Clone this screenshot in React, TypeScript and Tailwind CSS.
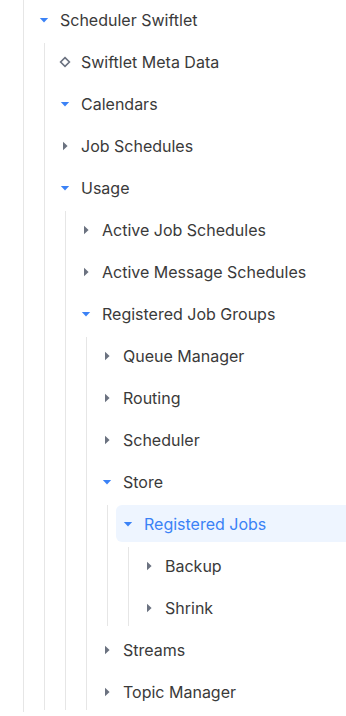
import React from "react";

type Node = {
  label: string;
  kind: "open" | "closed" | "leaf";
  active?: boolean;
  children?: Node[];
};

const tree: Node = {
  label: "Scheduler Swiftlet",
  kind: "open",
  children: [
    { label: "Swiftlet Meta Data", kind: "leaf" },
    { label: "Calendars", kind: "open", children: [] },
    { label: "Job Schedules", kind: "closed" },
    {
      label: "Usage",
      kind: "open",
      children: [
        { label: "Active Job Schedules", kind: "closed" },
        { label: "Active Message Schedules", kind: "closed" },
        {
          label: "Registered Job Groups",
          kind: "open",
          children: [
            { label: "Queue Manager", kind: "closed" },
            { label: "Routing", kind: "closed" },
            { label: "Scheduler", kind: "closed" },
            {
              label: "Store",
              kind: "open",
              children: [
                {
                  label: "Registered Jobs",
                  kind: "open",
                  active: true,
                  children: [
                    { label: "Backup", kind: "closed" },
                    { label: "Shrink", kind: "closed" },
                  ],
                },
              ],
            },
            { label: "Streams", kind: "closed" },
            { label: "Topic Manager", kind: "closed" },
          ],
        },
      ],
    },
  ],
};

function Icon({ kind }: { kind: Node["kind"] }) {
  if (kind === "open")
    return (
      <svg width="16" height="16" viewBox="0 0 16 16">
        <path d="M3.8 6 L12.2 6 L8 10.6 Z" fill="#3b82f6" />
      </svg>
    );
  if (kind === "closed")
    return (
      <svg width="16" height="16" viewBox="0 0 16 16">
        <path d="M6 3.8 L10.6 8 L6 12.2 Z" fill="#6b7280" />
      </svg>
    );
  return (
    <svg width="16" height="16" viewBox="0 0 16 16">
      <path d="M8 3.6 L12.4 8 L8 12.4 L3.6 8 Z" fill="none" stroke="#6b7280" strokeWidth="1.6" />
    </svg>
  );
}

function TreeNode({ node }: { node: Node }) {
  const hasKids = node.kind === "open" && node.children && node.children.length > 0;
  return (
    <div className="flex flex-col">
      <div
        className={
          "flex h-[37px] items-center gap-2 pl-1 rounded-l-md " +
          (node.active ? "bg-[#eef5ff] text-[#3b82f6]" : "text-[#3a3a3a]")
        }
      >
        <span className="flex w-4 h-4 items-center justify-center shrink-0">
          <Icon kind={node.kind} />
        </span>
        <span className="text-base leading-none whitespace-nowrap">{node.label}</span>
      </div>
      {hasKids && (
        <div className="ml-3 mt-[5px] flex flex-col gap-[5px] border-l border-[#e6e6e6] pl-2">
          {node.children!.map((c) => (
            <TreeNode key={c.label} node={c} />
          ))}
        </div>
      )}
    </div>
  );
}

export default function App() {
  return (
    <div
      className="w-[346px] h-[716px] bg-white overflow-hidden"
      style={{ fontFamily: "Inter, 'Noto Sans', sans-serif" }}
    >
      <div className="ml-[23px] h-[712px] border-l border-[#e6e6e6] pl-2 pt-[1px]">
        <TreeNode node={tree} />
      </div>
    </div>
  );
}
